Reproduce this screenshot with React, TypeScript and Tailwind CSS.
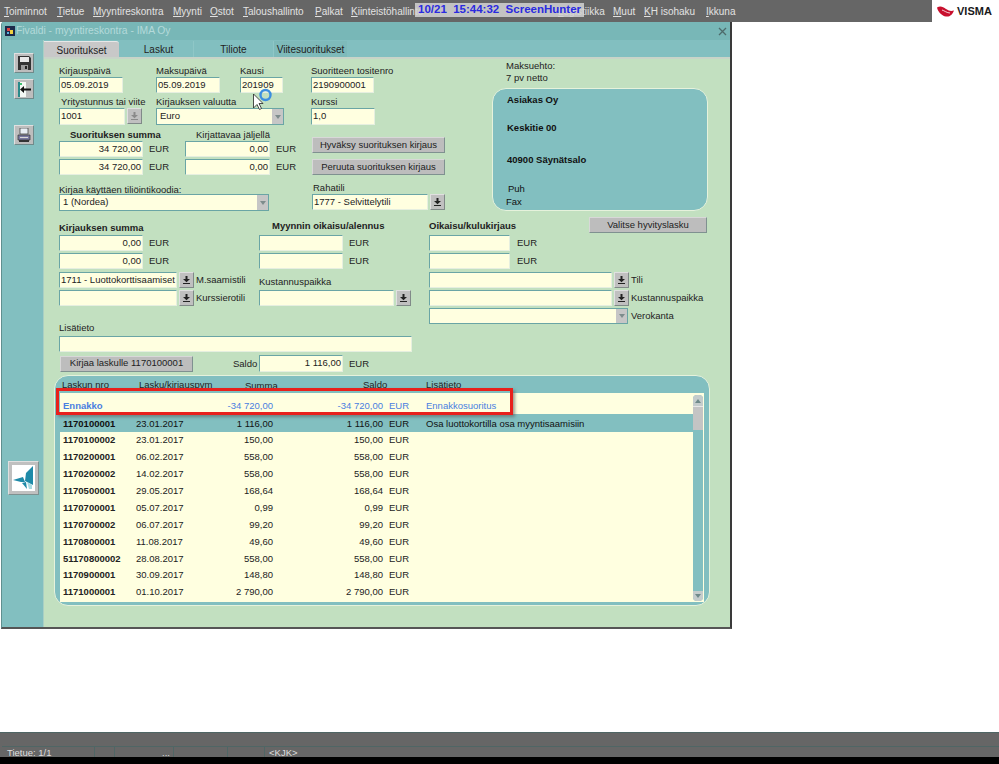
import type { ReactNode } from "react";

const MENU: { hot: string; rest: string; w: string }[] = [
  { hot: "T", rest: "oiminnot", w: "w-[53px]" },
  { hot: "T", rest: "ietue", w: "w-[36px]" },
  { hot: "M", rest: "yyntireskontra", w: "w-[80px]" },
  { hot: "M", rest: "yynti", w: "w-[37px]" },
  { hot: "O", rest: "stot", w: "w-[33px]" },
  { hot: "T", rest: "aloushallinto", w: "w-[72px]" },
  { hot: "P", rest: "alkat", w: "w-[36px]" },
  { hot: "K", rest: "iinteistöhallinto", w: "w-[207px]" },
  { hot: "L", rest: "ogistiikka", w: "w-[55px]" },
  { hot: "M", rest: "uut", w: "w-[31px]" },
  { hot: "K", rest: "H isohaku", w: "w-[62px]" },
  { hot: "I", rest: "kkuna", w: "w-[40px]" },
];

const ROWS = [
  ["1170100002", "23.01.2017", "150,00", "150,00"],
  ["1170200001", "06.02.2017", "558,00", "558,00"],
  ["1170200002", "14.02.2017", "558,00", "558,00"],
  ["1170500001", "29.05.2017", "168,64", "168,64"],
  ["1170700001", "05.07.2017", "0,99", "0,99"],
  ["1170700002", "06.07.2017", "99,20", "99,20"],
  ["1170800001", "11.08.2017", "49,60", "49,60"],
  ["51170800002", "28.08.2017", "558,00", "558,00"],
  ["1170900001", "30.09.2017", "148,80", "148,80"],
  ["1171000001", "01.10.2017", "2 790,00", "2 790,00"],
];

function Field({ w, value, right, h = "h-[16px]" }: { w: string; value?: string; right?: boolean; h?: string }) {
  return (
    <div
      className={`${w} ${h} shrink-0 bg-[#ffffe0] border border-t-[#6aa5a5] border-l-[#6aa5a5] border-r-[#e6efe0] border-b-[#e6efe0] px-[1px] flex items-center text-[9.5px] text-[#222] whitespace-nowrap overflow-hidden ${right ? "justify-end" : ""}`}
    >
      {value}
    </div>
  );
}

function LovButton({ faded }: { faded?: boolean }) {
  return (
    <div className="w-[15px] h-[16px] shrink-0 bg-[#c0c0c0] border border-t-[#e0e0e0] border-l-[#e0e0e0] border-r-[#808a88] border-b-[#808a88] flex items-center justify-center">
      <svg width="7" height="8" viewBox="0 0 7 8">
        <path d="M2.5 0h2v3H7L3.5 6.2 0 3h2.5zM0 7h7v1H0z" fill={faded ? "#8a8a8a" : "#222"} />
      </svg>
    </div>
  );
}

function Select({ w, value, h = "h-[17px]" }: { w: string; value?: string; h?: string }) {
  return (
    <div className={`${w} ${h} shrink-0 bg-[#ffffe0] border border-t-[#6aa5a5] border-l-[#6aa5a5] border-r-[#6aa5a5] border-b-[#6aa5a5] pl-[3px] flex items-center justify-between text-[9.5px] text-[#222]`}>
      <span>{value}</span>
      <span className="w-[11px] h-full bg-[#c6c6c6] flex items-center justify-center">
        <svg width="6" height="4" viewBox="0 0 6 4">
          <path d="M0 0h6L3 4z" fill="#7d8c8c" />
        </svg>
      </span>
    </div>
  );
}

function Button({ w, children, h = "h-[16px]" }: { w: string; children: ReactNode; h?: string }) {
  return (
    <div className={`${w} ${h} shrink-0 bg-[#bdbdbd] border border-t-[#d8d8d8] border-l-[#d8d8d8] border-r-[#7f9190] border-b-[#7f9190] flex items-center justify-center text-[9.5px] text-[#222] whitespace-nowrap`}>
      {children}
    </div>
  );
}

function Label({ children, className = "" }: { children: ReactNode; className?: string }) {
  return <div className={`h-[12px] leading-[12px] text-[9.5px] text-[#222] whitespace-nowrap ${className}`}>{children}</div>;
}

function Unit({ children, className = "" }: { children: ReactNode; className?: string }) {
  return <span className={`text-[9.5px] text-[#222] whitespace-nowrap ${className}`}>{children}</span>;
}

function ToolButton({ children, className = "" }: { children: ReactNode; className?: string }) {
  return (
    <div className={`w-[20px] h-[20px] ml-[12px] bg-[#bdbdbd] border border-t-[#e0e0e0] border-l-[#e0e0e0] border-r-[#6f8a8a] border-b-[#6f8a8a] flex items-center justify-center ${className}`}>
      {children}
    </div>
  );
}

function UpperForm() {
  return (
    <div className="flex">
      <div className="w-[433px] shrink-0">
        <div className="flex pt-[6px]">
          <div className="w-[97px]">
            <Label>Kirjauspäivä</Label>
            <Field w="w-[64px]" value="05.09.2019" />
          </div>
          <div className="w-[84px]">
            <Label>Maksupäivä</Label>
            <Field w="w-[64px]" value="05.09.2019" />
          </div>
          <div className="w-[71px]">
            <Label>Kausi</Label>
            <Field w="w-[43px]" value="201909" />
          </div>
          <div>
            <Label>Suoritteen tositenro</Label>
            <Field w="w-[63px]" value="2190900001" />
          </div>
        </div>

        <div className="flex mt-[3px]">
          <div className="w-[97px]">
            <Label className="pl-[2px]">Yritystunnus tai viite</Label>
            <div className="flex gap-[2px]">
              <Field w="w-[66px]" value="1001" h="h-[17px]" />
              <LovButton faded />
            </div>
          </div>
          <div className="w-[155px]">
            <Label>Kirjauksen valuutta</Label>
            <Select w="w-[128px]" value="Euro" />
          </div>
          <div>
            <Label>Kurssi</Label>
            <Field w="w-[64px]" value="1,0" h="h-[17px]" />
          </div>
        </div>

        <div className="flex mt-[3px]">
          <div className="w-[253px] shrink-0">
            <div className="flex">
              <Label className="font-bold w-[126px] pl-[11px] leading-[13px]">Suorituksen summa</Label>
              <Label className="pl-[11px] leading-[13px]">Kirjattavaa jäljellä</Label>
            </div>
            <div className="flex items-center mt-[1px]">
              <Field w="w-[84px]" value="34 720,00" right />
              <Unit className="ml-[6px] w-[36px]">EUR</Unit>
              <Field w="w-[85px]" value="0,00" right />
              <Unit className="ml-[6px]">EUR</Unit>
            </div>
            <div className="flex items-center mt-[2px]">
              <Field w="w-[84px]" value="34 720,00" right />
              <Unit className="ml-[6px] w-[36px]">EUR</Unit>
              <Field w="w-[85px]" value="0,00" right />
              <Unit className="ml-[6px]">EUR</Unit>
            </div>
          </div>
          <div className="pt-[9px] flex flex-col gap-[6px]">
            <Button w="w-[133px]">Hyväksy suorituksen kirjaus</Button>
            <Button w="w-[133px]">Peruuta suorituksen kirjaus</Button>
          </div>
        </div>

        <div className="flex mt-[7px]">
          <div className="w-[253px] shrink-0">
            <Label className="leading-[16px]">Kirjaa käyttäen tiliöintikoodia:</Label>
            <Select w="w-[210px]" value="1 (Nordea)" />
          </div>
          <div>
            <Label className="pl-[1px]">Rahatili</Label>
            <div className="flex gap-[2px]">
              <Field w="w-[116px]" value="1777 - Selvittelytili" />
              <LovButton />
            </div>
          </div>
        </div>
      </div>

      <div className="pt-[1px]">
        <div className="pl-[14px]">
          <Label>Maksuehto:</Label>
          <Label>7 pv netto</Label>
        </div>
        <div className="mt-[4px] w-[216px] h-[123px] rounded-[14px] bg-[#82bfc0] border border-[#e6f2dc] pl-[14px] text-[9.5px] text-[#111] flex flex-col">
          <div className="font-bold mt-[5px] leading-[12px]">Asiakas Oy</div>
          <div className="font-bold mt-[16px] leading-[12px]">Keskitie 00</div>
          <div className="font-bold mt-[20px] leading-[12px]">40900 Säynätsalo</div>
          <div className="mt-[17px] leading-[12px] pl-[1px]">Puh</div>
          <div className="mt-[1px] leading-[12px] -ml-[1px]">Fax</div>
        </div>
      </div>
    </div>
  );
}

function LowerForm() {
  return (
    <div className="flex mt-[6px]">
      <div className="w-[370px] shrink-0">
        <div className="flex">
          <div className="w-[200px] shrink-0 pt-[5px]">
            <Label className="font-bold">Kirjauksen summa</Label>
            <div className="flex items-center mt-[1px]">
              <Field w="w-[84px]" value="0,00" right />
              <Unit className="ml-[6px]">EUR</Unit>
            </div>
            <div className="flex items-center mt-[2px]">
              <Field w="w-[84px]" value="0,00" right />
              <Unit className="ml-[6px]">EUR</Unit>
            </div>
            <div className="flex items-center gap-[2px] mt-[3px]">
              <Field w="w-[118px]" value="1711 - Luottokorttisaamiset" />
              <LovButton />
              <Unit>M.saamistili</Unit>
            </div>
            <div className="flex items-center gap-[2px] mt-[2px]">
              <Field w="w-[118px]" />
              <LovButton />
              <Unit>Kurssierotili</Unit>
            </div>
          </div>
          <div className="pt-[3px]">
            <Label className="font-bold pl-[13px]">Myynnin oikaisu/alennus</Label>
            <div className="flex items-center mt-[3px]">
              <Field w="w-[84px]" />
              <Unit className="ml-[6px]">EUR</Unit>
            </div>
            <div className="flex items-center mt-[2px]">
              <Field w="w-[84px]" />
              <Unit className="ml-[6px]">EUR</Unit>
            </div>
            <Label className="mt-[7px]">Kustannuspaikka</Label>
            <div className="flex gap-[2px] mt-[2px]">
              <Field w="w-[135px]" />
              <LovButton />
            </div>
          </div>
        </div>

        <Label className="mt-[16px]">Lisätieto</Label>
        <div className="mt-[2px]">
          <Field w="w-[353px]" />
        </div>
        <div className="flex items-center mt-[3px]">
          <div className="ml-[1px]">
            <Button w="w-[133px]">Kirjaa laskulle 1170100001</Button>
          </div>
          <Unit className="ml-[40px] w-[26px] pt-[1px]">Saldo</Unit>
          <Field w="w-[84px]" value="1 116,00" right h="h-[17px]" />
          <Unit className="ml-[6px] pt-[1px]">EUR</Unit>
        </div>
      </div>

      <div className="w-[278px] shrink-0">
        <div className="flex justify-between h-[18px]">
          <Label className="font-bold mt-[3px]">Oikaisu/kulukirjaus</Label>
          <Button w="w-[118px]">Valitse hyvityslasku</Button>
        </div>
        <div className="flex items-center">
          <Field w="w-[81px]" />
          <Unit className="ml-[7px]">EUR</Unit>
        </div>
        <div className="flex items-center mt-[2px]">
          <Field w="w-[81px]" />
          <Unit className="ml-[7px]">EUR</Unit>
        </div>
        <div className="flex items-center gap-[2px] mt-[3px]">
          <Field w="w-[183px]" />
          <LovButton />
          <Unit>Tili</Unit>
        </div>
        <div className="flex items-center gap-[2px] mt-[2px]">
          <Field w="w-[183px]" />
          <LovButton />
          <Unit>Kustannuspaikka</Unit>
        </div>
        <div className="flex items-center gap-[3px] mt-[2px]">
          <Select w="w-[199px]" h="h-[16px]" />
          <Unit>Verokanta</Unit>
        </div>
      </div>
    </div>
  );
}

function Scrollbar() {
  return (
    <div className="w-[10px] h-[206px] mt-[2px] bg-[#82bfc0] rounded-[4px] flex flex-col justify-between shrink-0">
      <div>
        <div className="h-[11px] bg-[#c4cccc] rounded-t-[4px] flex items-center justify-center">
          <svg width="6" height="4" viewBox="0 0 6 4">
            <path d="M3 0l3 4H0z" fill="#6f8a8a" />
          </svg>
        </div>
        <div className="h-[24px] bg-[#c4c4c4] border-t border-[#e8e8e8]" />
      </div>
      <div className="h-[10px] bg-[#c4cccc] rounded-b-[4px] flex items-center justify-center">
        <svg width="6" height="4" viewBox="0 0 6 4">
          <path d="M0 0h6L3 4z" fill="#6f8a8a" />
        </svg>
      </div>
    </div>
  );
}

function Columns({ no, date, sum, bal, info, className }: { no: string; date: string; sum: string; bal: string; info?: string; className: string }) {
  return (
    <div className={`flex items-center text-[9.5px] whitespace-nowrap ${className}`}>
      <span className="w-[76px] pl-[3px] font-bold">{no}</span>
      <span className="w-[60px]">{date}</span>
      <span className="w-[77px] text-right">{sum}</span>
      <span className="w-[110px] text-right">{bal}</span>
      <span className="w-[43px] pl-[6px]">EUR</span>
      <span>{info}</span>
    </div>
  );
}

function InvoiceTable() {
  return (
    <div className="mt-[3px] ml-[10px] w-[656px] h-[231px] rounded-[14px] bg-[#82bfc0] border border-[#e6f2dc] pl-[5px] relative">
      <div className="flex h-[17px] items-center pt-[1px] text-[9.5px] text-[#222] whitespace-nowrap">
        <span className="w-[79px] pl-[2px]">Laskun nro</span>
        <span className="w-[106px]">Lasku/kirjauspvm</span>
        <span className="w-[118px] pt-[2px]">Summa</span>
        <span className="w-[63px]">Saldo</span>
        <span>Lisätieto</span>
      </div>
      <div className="w-[644px] h-[209px] bg-[#ffffe0] flex">
        <div className="w-[633px] shrink-0">
          <Columns
            no="Ennakko"
            date=""
            sum="-34 720,00"
            bal="-34 720,00"
            info="Ennakkosuoritus"
            className="h-[21px] pt-[6px] text-[#4a80e0]"
          />
          <Columns
            no="1170100001"
            date="23.01.2017"
            sum="1 116,00"
            bal="1 116,00"
            info="Osa luottokortilla osa myyntisaamisiin"
            className="h-[18px] pt-[2px] bg-[#82bfc0] text-[#111]"
          />
          {ROWS.map((r) => (
            <Columns key={r[0]} no={r[0]} date={r[1]} sum={r[2]} bal={r[3]} className="h-[16.9px] text-[#222]" />
          ))}
        </div>
        <Scrollbar />
      </div>
      {/* annotation drawn over the screenshot */}
      <div className="absolute left-[1px] top-[12px] w-[457px] h-[27px] border-[3px] border-[#e8201c] shadow-[2px_2px_3px_rgba(90,90,90,0.6)]" />
    </div>
  );
}

export default function App() {
  return (
    <div className="w-[999px] h-[764px] bg-white flex flex-col relative overflow-hidden font-['Liberation_Sans',Arial,sans-serif]">
      {/* menu bar */}
      <div className="h-[22px] flex shrink-0">
        <div className="w-[932px] bg-[#666666] flex items-center pl-[4px] text-[10px] text-[#e2e2e2]">
          {MENU.map((m, i) => (
            <span key={i} className={`${m.w} shrink-0 whitespace-nowrap`}>
              <span className="underline">{m.hot}</span>
              {m.rest}
            </span>
          ))}
        </div>
        <div className="flex-1 flex items-center pl-[5px] gap-[3px]">
          <svg width="17" height="11" viewBox="0 0 17 11">
            <path d="M0 1.5C3-.5 6 .5 9 3c3 2 5 2.5 8 1.5-1.500 4-4 6.500-8 6C5 10 1 6 0 1.500z" fill="#c8102e" />
            <path d="M5 4c2 .5 5 3 8 3" stroke="#fff" strokeWidth="0.8" fill="none" />
          </svg>
          <span className="text-[11px] font-bold text-[#1a1a1a] leading-none">VISMA</span>
        </div>
      </div>

      {/* form window */}
      <div className="ml-[1px] w-[731px] h-[607px] shrink-0 bg-[#82bfc0] border-l border-l-[#5f8f8f] border-r-2 border-r-[#3a3a3a] border-b-2 border-b-[#555] rounded-tl-[3px] flex flex-col">
        <div className="h-[18px] shrink-0 bg-[#78b7b7] flex items-center justify-between pl-[2px] pr-[3px]">
          <div className="flex items-center">
            <svg width="12" height="12" viewBox="0 0 12 12">
              <rect x="1" y="1" width="10" height="10" fill="#1c2a4a" />
              <rect x="3" y="3" width="3" height="3" fill="#e04040" />
              <rect x="6" y="5" width="3" height="4" fill="#f0d040" />
              <rect x="3" y="7" width="2" height="2" fill="#5ab0e0" />
            </svg>
            <span className="text-[10.3px] text-[#b4dada] whitespace-nowrap">Fivaldi - myyntireskontra - IMA Oy</span>
          </div>
          <svg width="9" height="9" viewBox="0 0 9 9">
            <path d="M1 1l7 7M8 1L1 8" stroke="#4d6a6a" strokeWidth="1.300" />
          </svg>
        </div>
        <div className="flex flex-1 min-h-0">
          <div className="w-[42px] shrink-0 pt-[13px] border-r border-[#a9cfc4]">
            <ToolButton>
              <svg width="13" height="14" viewBox="0 0 13 14">
                <path d="M0 0h11l2 2v12H0z" fill="#333" />
                <rect x="2" y="1" width="9" height="5" fill="#e8e8e8" />
                <rect x="3" y="9" width="7" height="5" fill="#9a9a9a" />
                <rect x="7" y="10" width="2" height="3" fill="#222" />
              </svg>
            </ToolButton>
            <ToolButton className="mt-[6px]">
              <svg width="14" height="15" viewBox="0 0 14 15">
                <rect x="1" y="0" width="8" height="15" fill="#f4f8f4" />
                <rect x="1" y="0" width="2" height="15" fill="#2a8a8a" />
                <rect x="3" y="1" width="2" height="2" fill="#40c070" />
                <path d="M3 7.500l4-3.500v2.500h7v2H7V11z" fill="#111" />
              </svg>
            </ToolButton>
            <ToolButton className="mt-[26px]">
              <svg width="14" height="15" viewBox="0 0 14 15">
                <rect x="3" y="0" width="8" height="6" fill="#e8eef4" stroke="#333" strokeWidth="0.7" />
                <path d="M1 7h12v5H1z" fill="#7a7aa0" stroke="#333" strokeWidth="0.7" />
                <rect x="2" y="12" width="10" height="2" fill="#333" />
                <rect x="3" y="9" width="8" height="1" fill="#d8d8d8" />
              </svg>
            </ToolButton>
            <div className="mt-[316px] ml-[6px] w-[31px] h-[34px] bg-[#c0c0c0] border border-t-[#e0e0e0] border-l-[#e0e0e0] border-r-[#7f9190] border-b-[#7f9190] p-[3px]">
              <div className="w-full h-full bg-white flex items-center justify-center">
                <svg width="21" height="24" viewBox="0 0 21 24">
                  <path d="M20 0L13 7l-1 8 8 4z" fill="#1f8aa8" />
                  <path d="M0 14l10-3 2 5-4 0z" fill="#1f8aa8" />
                  <path d="M9 17l4-1 1 7z" fill="#1f8aa8" />
                  <path d="M14 16l5 3 0 4-3 0z" fill="#a9dbe2" />
                </svg>
              </div>
            </div>
          </div>
          <div className="flex-1 flex flex-col min-w-0">
            <div className="h-[18px] shrink-0 flex items-end text-[10px] text-[#222]">
              <div className="w-[75px] h-[17px] bg-[#c8c8c8] rounded-tr-[3px] border-t border-[#e8e8e8] flex items-center justify-center">Suoritukset</div>
              <div className="w-[75px] h-[17px] flex items-center justify-center pl-[5px] border-r border-[#8fc7c7]">Laskut</div>
              <div className="w-[80px] h-[17px] flex items-center justify-center border-r border-[#8fc7c7]">Tiliote</div>
              <div className="w-[73px] h-[17px] flex items-center justify-center bg-[#7ebaba]">Viitesuoritukset</div>
            </div>
            <div className="flex-1 bg-[#c2e0c0] border-t-2 border-[#c8d4c8] pl-[15px] -mt-[1px]">
              <UpperForm />
              <LowerForm />
              <div className="-ml-[15px]">
                <InvoiceTable />
              </div>
            </div>
          </div>
        </div>
      </div>

      {/* status bar */}
      <div className="mt-auto shrink-0">
        <div className="h-[25px] bg-[#666666] border-t border-[#4f6665] pl-[2px] flex flex-col justify-end">
          <div className="h-[11px] border-t border-[#4f6665] flex text-[9.5px] text-[#dedede] leading-[11px]">
            <span className="w-[93px] pl-[5px] border-r border-[#4f6665]">Tietue: 1/1</span>
            <span className="w-[20px] border-r border-[#4f6665]" />
            <span className="w-[59px] border-r border-[#4f6665] text-right pr-[3px]">...</span>
            <span className="w-[54px] border-r border-[#4f6665]" />
            <span className="w-[37px] border-r border-[#4f6665]" />
            <span className="pl-[4px]">&lt;KJK&gt;</span>
          </div>
        </div>
        <div className="h-[7px] bg-black" />
      </div>

      {/* screen capture stamp and pointer, over everything else */}
      <div className="absolute left-[415px] top-[3px] w-[169px] h-[14px] pl-[3px] bg-[#d4d4d4]/85 flex items-center text-[11.5px] font-bold text-[#2a2ae0] whitespace-pre leading-none">
        {"10/21  15:44:32  ScreenHunter"}
      </div>
      <svg className="absolute left-[252px] top-[88px]" width="24" height="24" viewBox="0 0 24 24">
        <circle cx="13.500" cy="7" r="5" fill="none" stroke="#3c8ee0" strokeWidth="2.400" />
        <path d="M1.500 6v14l3.500-3.500 2.500 5 2-1-2.500-5H11z" fill="#fff" stroke="#222" strokeWidth="0.8" />
      </svg>
    </div>
  );
}
